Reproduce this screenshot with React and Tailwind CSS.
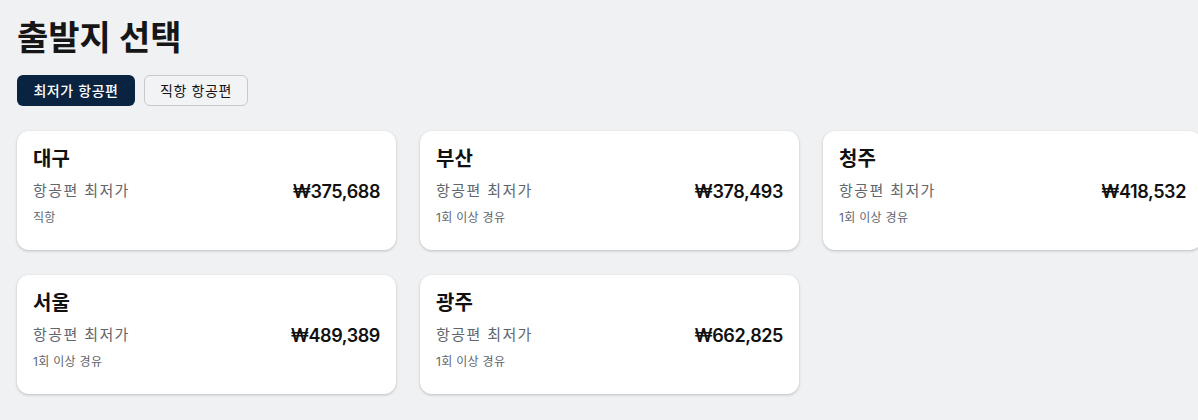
const cities = [
  { name: '대구', price: '₩375,688', note: '직항' },
  { name: '부산', price: '₩378,493', note: '1회 이상 경유' },
  { name: '청주', price: '₩418,532', note: '1회 이상 경유' },
  { name: '서울', price: '₩489,389', note: '1회 이상 경유' },
  { name: '광주', price: '₩662,825', note: '1회 이상 경유' },
];

function CityCard({ city }) {
  return (
    <div className="h-[119px] rounded-xl bg-white px-4 pt-[14px] shadow-[0_1px_3px_rgba(0,0,0,0.22)]">
      <h2 className="text-[20px] font-bold leading-7 text-[#111]">{city.name}</h2>
      <div className="mt-[5px] flex items-center justify-between">
        <span className="text-[15px] tracking-[1.4px] text-[#5f666e]">항공편 최저가</span>
        <span className="text-[18px] font-semibold tracking-[-0.4px] text-[#111]">{city.price}</span>
      </div>
      <p className="mt-[4px] text-[12px] tracking-[0.3px] text-[#5f666e]">{city.note}</p>
    </div>
  );
}

export default function App() {
  return (
    <div
      className="min-h-[420px] overflow-hidden bg-[#eff1f3] pl-[17px] pt-[16px]"
      style={{ fontFamily: 'Inter, "Noto Sans CJK KR", sans-serif' }}
    >
      <h1 className="text-[34px] font-bold leading-[44px] text-[#161616]">출발지 선택</h1>

      <div className="mt-[15px] flex gap-[9px]">
        <button className="h-[31px] w-[118px] rounded-md bg-[#0a2341] text-[14px] font-medium tracking-[0.6px] text-white">
          최저가 항공편
        </button>
        <button className="h-[31px] w-[104px] rounded-md border border-[#c6cacf] bg-[#f2f3f5] text-[14px] tracking-[0.6px] text-[#161616]">
          직항 항공편
        </button>
      </div>

      <div className="mt-[25px] grid w-[1200px] grid-cols-[379px_379px_379px] gap-x-[24px] gap-y-[25px]">
        {cities.map((c) => (
          <CityCard key={c.name} city={c} />
        ))}
      </div>
    </div>
  );
}
